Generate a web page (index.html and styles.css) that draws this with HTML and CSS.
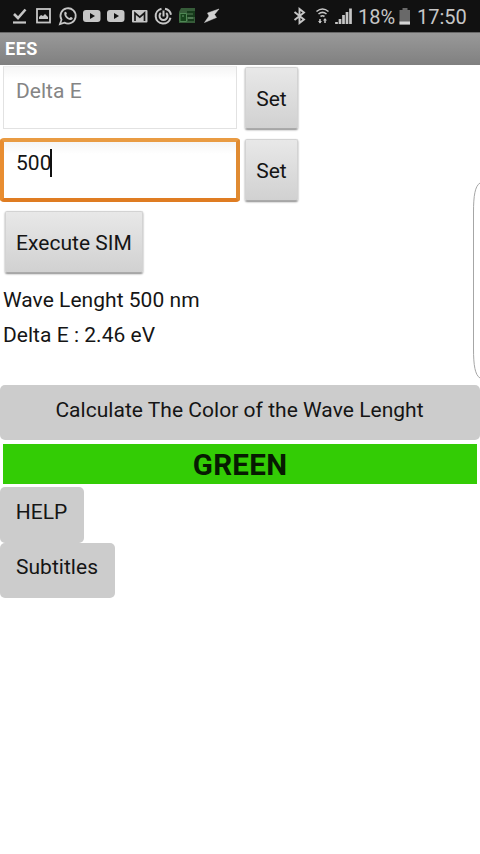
FILE: index.html
```html
<!DOCTYPE html>
<html lang="en">
<head>
<meta charset="utf-8">
<meta name="viewport" content="width=device-width">
<title>EES</title>
<link rel="stylesheet" href="styles.css">
</head>
<body>
<header class="status">
  <svg class="notifications" width="224" height="32" viewBox="0 0 224 32" fill="none" stroke="#c6c6c6">
    <path d="M14 14l4 4 7.500-8.500" stroke-width="2.600"/><path d="M13 22.500h13" stroke-width="2.200"/>
    <rect x="37" y="9" width="13" height="13.500" stroke-width="1.800"/><path d="M39 19v-2l2-2 2 1 2-2 3 3v2z" fill="#c6c6c6" stroke="none"/>
    <path d="M60 24l1.500-4.300a7.600 7.600 0 1 1 3 2.900z" stroke-width="1.800"/><path d="M64.500 12.200c1.200-1.200 2 .1 2.300 1.200.1.700-.7 1-.5 1.600.7 1.500 1.700 2.400 3 2.900.7.200 1-1 1.600-.8 1 .4 2.300 1 1.700 1.900-2.800 3.300-9.700-2.500-8.100-6.800z" fill="#c6c6c6" stroke="none"/>
    <rect x="83" y="10" width="17.500" height="12" rx="3" fill="#c6c6c6" stroke="none"/><path d="M90 13l5 3-5 3z" fill="#111" stroke="none"/>
    <rect x="107" y="10" width="17.500" height="12" rx="3" fill="#c6c6c6" stroke="none"/><path d="M114 13l5 3-5 3z" fill="#111" stroke="none"/>
    <rect x="132" y="10" width="15.500" height="12.500" rx="1" fill="#c6c6c6" stroke="none"/><path d="M135 21v-8l4.800 4.200 4.700-4.200v8" stroke="#171717" stroke-width="1.700"/>
    <path d="M161.500 8.800a7.500 7.500 0 1 0 9 9M165 8.700a7.500 7.500 0 0 1 6 6" stroke-width="2"/><path d="M160.800 13a4 4 0 1 0 5.400 0M163.500 10.500v6" stroke-width="2"/>
    <path d="M181 8h14v15h-16v-11z" fill="#365c39" stroke="none"/><path d="M187 12h7v4h-7M188 20h6" stroke="#163b1b" stroke-width="2"/><path d="M180 13.500h6.500v8H180z" fill="#17451c" stroke="#4f8754"/><path d="M188 18h5M182 16h2" stroke="#6d9670"/>
    <path d="M219 9l-11.500 4 1.500 3-4.500 6.500 12-5-2-3z" fill="#d2d2d2" stroke="#d2d2d2" stroke-width=".5"/>
  </svg>
  <div class="system">
    <svg width="64" height="32" viewBox="292 0 64 32" fill="none" stroke="#c6c6c6">
      <path d="M294.500 12l9.500 7.500-4.500 3.500V9l4.500 3.500-9.500 7.500" stroke-width="1.900"/>
      <path d="M316.500 11.500q6-5 12 0M318.500 14q4-3.300 8 0M320.500 16.500q2-1.500 4 0" stroke-width="1.600"/><path d="M320 19v4M325 19v4" stroke-width="1.500"/><path d="M318 21h4l-2 2.500zM323 20.500h4l-2-2.500z" fill="#c6c6c6" stroke="none"/>
      <path d="M336.500 22v2M340 19v5M343.500 15v9M347 12v12M350.500 8.500v15.500" stroke-width="2.700"/>
    </svg>
    <span class="percent">18%</span>
    <svg class="battery" width="12" height="17" viewBox="0 0 12 17"><path d="M3.500 0h5v2H11v14.500H.5V2h3z" fill="#696969"/><path d="M.5 13.500H11v3H.5z" fill="#d5d5d5"/></svg>
    <span class="clock">17:50</span>
  </div>
</header>
<h1 class="title">EES</h1>
<main>
  <div class="row"><div class="field hint">Delta E</div><button class="btn set">Set</button></div>
  <div class="row"><div class="field focused">500<i class="caret"></i></div><button class="btn set">Set</button></div>
  <button class="btn execute">Execute SIM</button>
  <p class="line">Wave Lenght 500 nm</p>
  <p class="line">Delta E : 2.46 eV</p>
  <button class="flat wide">Calculate The Color of the Wave Lenght</button>
  <div class="result">GREEN</div>
  <button class="flat help">HELP</button>
  <button class="flat subtitles">Subtitles</button>
</main>
<svg class="edge" width="8" height="198" viewBox="0 0 8 198"><path d="M8 1C3 4 1.500 14 1.500 30v137c0 16 1.500 26 6.500 29" fill="#fff" stroke="#a6a6a6"/></svg>
</body>
</html>
```
FILE: styles.css
```css
* { box-sizing: border-box; }
body { margin: 0; width: 480px; height: 854px; overflow: hidden; position: relative; background: #fff; color: #151515; font: 21px/26px Roboto, sans-serif; letter-spacing: .03px; }
svg { display: block; flex: none; }
button { display: block; border: 0; padding: 0; color: inherit; font: inherit; letter-spacing: inherit; }
.status { height: 32px; display: flex; justify-content: space-between; background: #111; color: #c6c6c6; }
.system { display: flex; width: 188px; height: 32px; align-items: center; font-size: 20px; letter-spacing: 0; }
.percent { width: 39px; margin-left: 2px; padding-top: 2px; }
.battery { margin-left: 2px; }
.clock { margin-left: 6px; padding-top: 2px; }
.title { height: 33px; margin: 0; padding: 3px 5px; background: linear-gradient(#999, #808080); border-top: 1px solid #686868; color: #fff; font-size: 18px; line-height: 26px; font-weight: 700; letter-spacing: .5px; }
main { padding-top: .5px; }
.row { display: flex; height: 72px; gap: 5px; }
.field { width: 240px; background: linear-gradient(#f5f5f5, #fff 12px); }
.hint { width: 234px; height: 63px; margin: .5px 3px 0; padding: 10.500px 12px; border: 1px solid #e2e2e2; border-top-color: #eee; color: #858585; }
.focused { height: 63.500px; margin-top: .8px; border: 4px solid; border-color: #e99b43 #e08b32 #df7c22 #e88d31; border-radius: 4px; padding: 8px 12px; line-height: 26px; }
.caret { display: inline-block; width: 2px; height: 28px; margin: -3px 0 0 -2px; vertical-align: -7px; background: #111; }
.btn { height: 62px; background: linear-gradient(#e8e8e8, #d1d1d1); border: 1px solid #d3d3d3; border-bottom-color: #aaa; border-radius: 2px; box-shadow: 0 1px 2px #888; }
.set { width: 53px; margin-top: 1.500px; padding-top: 2px; }
.execute { width: 138px; margin: 1.500px 0 0 5px; padding-top: 2px; }
.line { margin: 0 0 0 3px; height: 34.500px; line-height: 26px; }
.execute + .line { margin-top: 14px; }
.flat { height: 55.500px; padding-bottom: 5px; padding-right: 1px; border-radius: 5px; background: #ccc; }
.wide { width: 480px; margin-top: 28.500px; }
.result { height: 40px; margin: 4px 3px 3px; background: #33cc05; color: #071b02; text-align: center; font-size: 29.500px; line-height: 43px; font-weight: 700; letter-spacing: .3px; }
.help { width: 84px; }
.subtitles { width: 115px; padding-bottom: 6.500px; }
.edge { position: absolute; right: 0; top: 182px; }
```
